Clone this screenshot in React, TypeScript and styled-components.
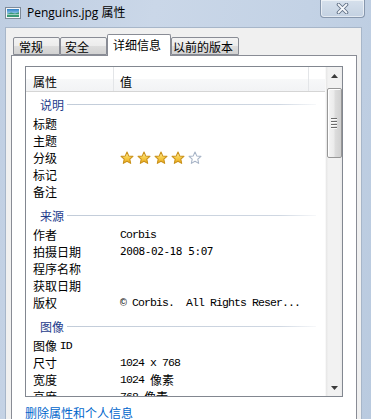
import React from "react";
import styled, { createGlobalStyle } from "styled-components";

const CJK = `"Noto Sans CJK SC", "Noto Sans", sans-serif`;

const GlobalStyle = createGlobalStyle`
  html, body { margin: 0; padding: 0; }
  body { background: #c4d3e5; font-family: ${CJK}; }
  * { box-sizing: border-box; }
`;

const Window = styled.div`
  width: 371px;
  height: 419px;
  overflow: hidden;
  display: flex;
  flex-direction: column;
  background: linear-gradient(100deg, #bfcee2 0%, #cad7e8 35%, #c3d2e5 70%, #b9cadf 100%);
`;

const TitleBar = styled.div`
  height: 27px;
  flex: none;
  display: flex;
  align-items: flex-start;
  padding-left: 5px;
`;

const AppIcon = styled.svg`
  margin-top: 6px;
  flex: none;
`;

const Title = styled.div`
  margin-left: 6px;
  line-height: 26px;
  font-size: 12px;
  color: #000;
  font-family: "Open Sans", ${CJK};
  white-space: nowrap;
`;

const CloseButton = styled.div`
  margin-left: auto;
  margin-right: 6px;
  width: 45px;
  height: 18px;
  border: 1px solid #8797ad;
  border-top: none;
  border-radius: 0 0 4px 4px;
  background: linear-gradient(180deg, #d6e0ec 0%, #cdd9e7 50%, #c3d1e2 100%);
  box-shadow: inset 0 0 0 1px rgba(255, 255, 255, 0.55);
  display: flex;
  align-items: center;
  justify-content: center;
`;

const Body = styled.div`
  flex: 1;
  min-height: 0;
  display: flex;
  padding: 0 9px 0 5px;
`;

const Client = styled.div`
  flex: 1;
  display: flex;
  flex-direction: column;
  background: #f0f0f0;
  border: 1px solid #a7b6c9;
  border-bottom: none;
  padding: 6px 4px 0 5px;
`;

const TabStrip = styled.div`
  height: 22px;
  margin: 0 0 -1px 2px;
  display: flex;
  align-items: flex-end;
  position: relative;
  z-index: 1;
  flex: none;
`;

const Tab = styled.div<{ $w: number; $pl: number; $active?: boolean }>`
  width: ${(p) => p.$w}px;
  height: ${(p) => (p.$active ? 22 : 18)}px;
  margin-bottom: ${(p) => (p.$active ? 0 : 1)}px;
  padding-left: ${(p) => p.$pl}px;
  padding-bottom: ${(p) => (p.$active ? 3 : 0)}px;
  border: 1px solid #898c95;
  border-bottom: ${(p) => (p.$active ? "none" : "1px solid #898c95")};
  border-radius: 2px 2px 0 0;
  background: ${(p) =>
    p.$active
      ? "#ffffff"
      : "linear-gradient(180deg, #f3f3f3 0%, #ececec 50%, #dddddd 51%, #d2d2d2 100%)"};
  font-size: 12px;
  color: #000;
  display: flex;
  align-items: center;
  white-space: nowrap;
  flex: none;
`;

const TabPage = styled.div`
  flex: none;
  height: 390px;
  background: #fff;
  border: 1px solid #898c95;
  padding: 10px 13px 0 13px;
  display: flex;
  flex-direction: column;
`;

const ListView = styled.div`
  height: 331px;
  flex: none;
  border: 1px solid #828790;
  display: flex;
  background: #fff;
`;

const ListBody = styled.div`
  flex: 1;
  min-width: 0;
  overflow: hidden;
  display: flex;
  flex-direction: column;
`;

const Header = styled.div`
  height: 25px;
  flex: none;
  display: grid;
  grid-template-columns: 88px 195px 1fr;
  border-bottom: 1px solid #d5d5d5;
  background: linear-gradient(180deg, #ffffff 0%, #ffffff 50%, #f7f8f9 51%, #f2f3f5 100%);
`;

const HeaderCell = styled.div<{ $pl: number; $last?: boolean }>`
  padding: 4px 0 0 ${(p) => p.$pl}px;
  border-right: ${(p) => (p.$last ? "none" : "1px solid #e3e5e8")};
  font-size: 12px;
  color: #000;
  display: flex;
  align-items: center;
  white-space: nowrap;
`;

const Group = styled.div<{ $first?: boolean }>`
  padding-top: ${(p) => (p.$first ? 1 : 4)}px;
  flex: none;
`;

const GroupHead = styled.div`
  height: 22px;
  display: flex;
  align-items: center;
  padding-left: 14px;
  padding-right: 9px;
`;

const GroupTitle = styled.span`
  font-size: 12px;
  color: #1e3c8c;
  white-space: nowrap;
`;

const GroupLine = styled.div`
  flex: 1;
  height: 1px;
  margin-left: 3px;
  background: linear-gradient(90deg, #c2ccd9 0%, #cfd7e2 85%, rgba(214, 221, 230, 0.2) 100%);
`;

const Row = styled.div`
  height: 17px;
  display: flex;
  align-items: center;
  flex: none;
`;

const Label = styled.div`
  width: 94px;
  flex: none;
  padding-left: 7px;
  font-size: 12px;
  color: #000;
  white-space: nowrap;
  display: flex;
  align-items: center;
`;

const Value = styled.div`
  flex: 1;
  min-width: 0;
  font-size: 12px;
  color: #000;
  white-space: pre;
  display: flex;
  align-items: center;
`;

const Mono = styled.span<{ $sans?: boolean }>`
  font-family: ${(p) => (p.$sans ? `"DejaVu Sans Mono", monospace` : `"Liberation Mono", monospace`)};
  font-size: ${(p) => (p.$sans ? "11px" : "11.5px")};
  letter-spacing: ${(p) => (p.$sans ? "-0.42px" : "-0.9px")};
  white-space: pre;
`;

const Stars = styled.div`
  display: flex;
  gap: 3px;
`;

const ScrollBar = styled.div`
  width: 17px;
  flex: none;
  display: flex;
  flex-direction: column;
  align-items: center;
  background: linear-gradient(90deg, #e6e6e6 0%, #f2f2f2 15%, #f2f2f2 85%, #e9e9e9 100%);
  border-left: 1px solid #f8f8f8;
`;

const ArrowButton = styled.div<{ $bottom?: boolean }>`
  width: 17px;
  height: 17px;
  flex: none;
  display: flex;
  align-items: center;
  justify-content: center;
  margin-top: ${(p) => (p.$bottom ? "auto" : "0")};
`;

const Thumb = styled.div`
  margin-top: 4px;
  width: 15px;
  height: 70px;
  border: 1px solid #979797;
  border-radius: 2px;
  background: linear-gradient(90deg, #f4f4f4 0%, #ebebeb 45%, #dcdcdc 55%, #d0d0d0 100%);
  box-shadow: inset 1px 1px 0 #fff;
  display: flex;
  flex-direction: column;
  align-items: center;
  justify-content: center;
  gap: 1px;
`;

const Grip = styled.div`
  width: 6px;
  height: 1px;
  background: #6c6c6c;
  box-shadow: 0 1px 0 #fafafa;
  margin-bottom: 1px;
`;

const DeleteLink = styled.a`
  margin-top: 8px;
  font-size: 12px;
  line-height: 16px;
  color: #0066cc;
  text-decoration: underline;
  align-self: flex-start;
  white-space: nowrap;
  cursor: pointer;
`;

const Star: React.FC<{ filled: boolean; id: string }> = ({ filled, id }) => (
  <svg width="14" height="14" viewBox="0 0 24 24">
    <defs>
      <linearGradient id={id} x1="0" y1="0" x2="0" y2="1">
        <stop offset="0" stopColor="#fff2b0" />
        <stop offset="0.5" stopColor="#f7cd4a" />
        <stop offset="1" stopColor="#e9a817" />
      </linearGradient>
    </defs>
    <path
      d="M12 1.8l3 6.6 7.2.8-5.4 4.9 1.5 7.1L12 17.6l-6.3 3.6 1.5-7.1L1.8 9.2 9 8.4z"
      fill={filled ? `url(#${id})` : "#ffffff"}
      stroke={filled ? "#c99019" : "#a6b3c6"}
      strokeWidth="1.8"
      strokeLinejoin="round"
    />
  </svg>
);

type RowData = { label: React.ReactNode; value?: React.ReactNode };
type GroupData = { title: string; rows: RowData[] };

const groups: GroupData[] = [
  {
    title: "说明",
    rows: [
      { label: "标题" },
      { label: "主题" },
      {
        label: "分级",
        value: (
          <Stars>
            {[0, 1, 2, 3, 4].map((i) => (
              <Star key={i} id={`star${i}`} filled={i < 4} />
            ))}
          </Stars>
        ),
      },
      { label: "标记" },
      { label: "备注" },
    ],
  },
  {
    title: "来源",
    rows: [
      { label: "作者", value: <Mono>Corbis</Mono> },
      { label: "拍摄日期", value: <Mono $sans>2008-02-18 5:07</Mono> },
      { label: "程序名称" },
      { label: "获取日期" },
      { label: "版权", value: <Mono>{"© Corbis.  All Rights Reser..."}</Mono> },
    ],
  },
  {
    title: "图像",
    rows: [
      { label: <>图像&nbsp;<Mono>ID</Mono></> },
      { label: "尺寸", value: <Mono>1024 x 768</Mono> },
      { label: "宽度", value: <><Mono>1024 </Mono>像素</> },
      { label: "高度", value: <><Mono>768 </Mono>像素</> },
    ],
  },
];

export default function App() {
  return (
    <>
      <GlobalStyle />
      <Window>
        <TitleBar>
          <AppIcon width="16" height="14" viewBox="0 0 16 14">
            <defs>
              <linearGradient id="sky" x1="0" y1="0" x2="0" y2="1">
                <stop offset="0" stopColor="#2f7fc4" />
                <stop offset="1" stopColor="#9fd0ee" />
              </linearGradient>
            </defs>
            <rect x="0.5" y="1.5" width="15" height="11" fill="#f4f6f8" stroke="#7e8b99" />
            <rect x="2" y="3" width="12" height="5" fill="url(#sky)" />
            <path d="M2 8 L6 6.5 L10 7.5 L14 6.2 L14 11 L2 11 Z" fill="#3a9a76" />
            <rect x="2" y="8" width="12" height="1" fill="#e8f2f2" opacity="0.6" />
          </AppIcon>
          <Title>Penguins.jpg 属性</Title>
          <CloseButton>
            <svg width="13" height="11" viewBox="0 0 13 11">
              <path d="M2.5 1.5 L10.5 9.5 M10.5 1.5 L2.5 9.5" stroke="#5f6f84" strokeWidth="3.6" strokeLinecap="round" />
              <path d="M2.5 1.5 L10.5 9.5 M10.5 1.5 L2.5 9.5" stroke="#f4f7fb" strokeWidth="1.8" strokeLinecap="round" />
            </svg>
          </CloseButton>
        </TitleBar>
        <Body>
          <Client>
            <TabStrip>
              <Tab $w={47} $pl={5}>常规</Tab>
              <Tab $w={47} $pl={4}>安全</Tab>
              <Tab $w={64} $pl={5} $active>详细信息</Tab>
              <Tab $w={68} $pl={1}>以前的版本</Tab>
            </TabStrip>
            <TabPage>
              <ListView>
                <ListBody>
                  <Header>
                    <HeaderCell $pl={7}>属性</HeaderCell>
                    <HeaderCell $pl={6}>值</HeaderCell>
                    <HeaderCell $pl={0} $last />
                  </Header>
                  {groups.map((g, gi) => (
                    <Group key={g.title} $first={gi === 0}>
                      <GroupHead>
                        <GroupTitle>{g.title}</GroupTitle>
                        <GroupLine />
                      </GroupHead>
                      {g.rows.map((r, ri) => (
                        <Row key={ri}>
                          <Label>{r.label}</Label>
                          <Value>{r.value}</Value>
                        </Row>
                      ))}
                    </Group>
                  ))}
                </ListBody>
                <ScrollBar>
                  <ArrowButton>
                    <svg width="7" height="4" viewBox="0 0 7 4">
                      <path d="M0 4 L3.5 0 L7 4 Z" fill="#3c3c3c" />
                    </svg>
                  </ArrowButton>
                  <Thumb>
                    <Grip />
                    <Grip />
                    <Grip />
                    <Grip />
                  </Thumb>
                  <ArrowButton $bottom>
                    <svg width="7" height="4" viewBox="0 0 7 4">
                      <path d="M0 0 L7 0 L3.5 4 Z" fill="#3c3c3c" />
                    </svg>
                  </ArrowButton>
                </ScrollBar>
              </ListView>
              <DeleteLink>删除属性和个人信息</DeleteLink>
            </TabPage>
          </Client>
        </Body>
      </Window>
    </>
  );
}
